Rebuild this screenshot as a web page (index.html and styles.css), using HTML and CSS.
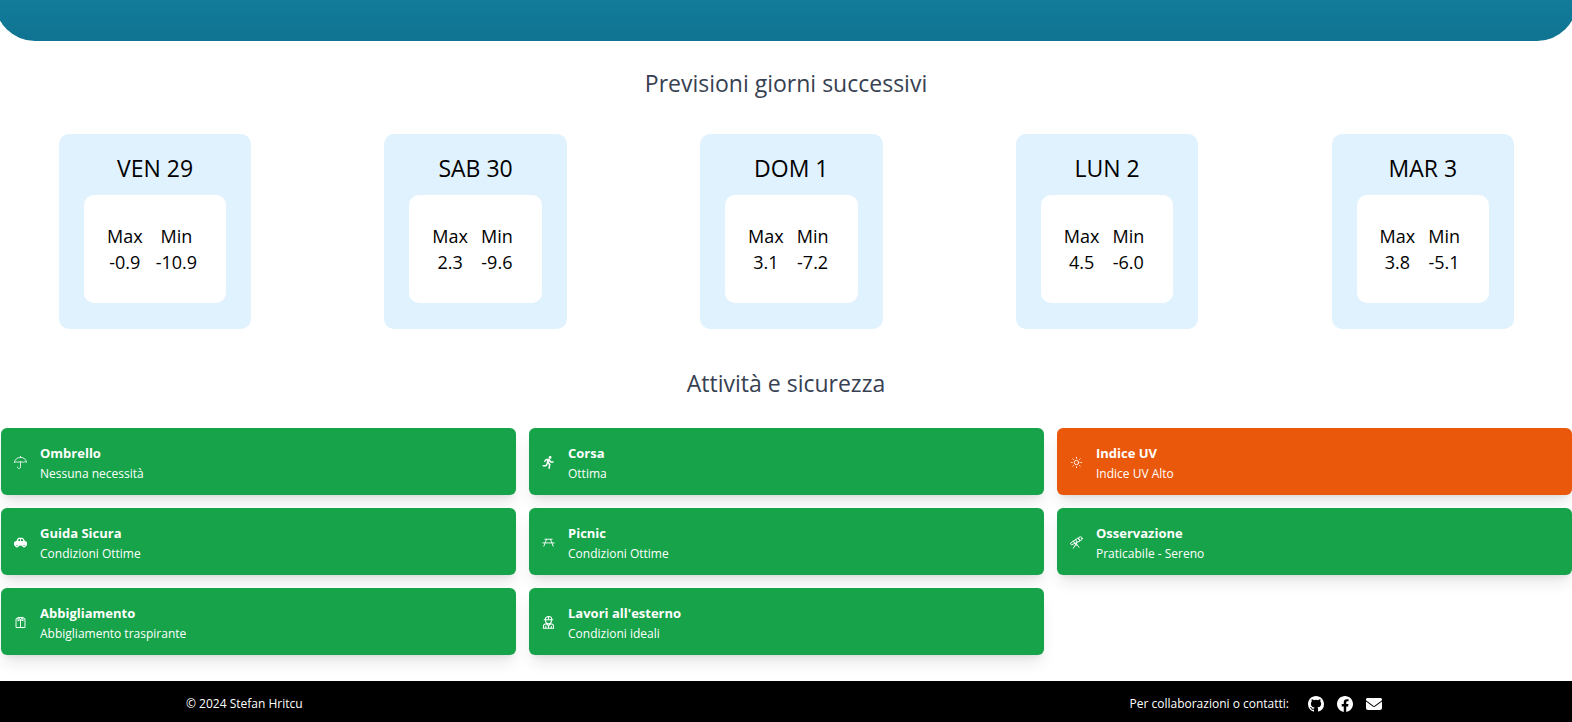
FILE: index.html
```html
<!DOCTYPE html>
<html lang="it">
<head>
<meta charset="utf-8">
<meta name="viewport" content="width=device-width, initial-scale=1">
<title>Previsioni meteo</title>
<link rel="stylesheet" href="styles.css">
</head>
<body>
<header class="hero"></header>
<main>
  <section>
    <h2 class="section-title">Previsioni giorni successivi</h2>
    <div class="forecast">
      <article class="day">
        <h3 class="day-name">VEN 29</h3>
        <div class="day-box"><table class="temps"><thead><tr><th>Max</th><th>Min</th></tr></thead><tbody><tr><td>-0.9</td><td>-10.9</td></tr></tbody></table></div>
      </article>
      <article class="day">
        <h3 class="day-name">SAB 30</h3>
        <div class="day-box"><table class="temps"><thead><tr><th>Max</th><th>Min</th></tr></thead><tbody><tr><td>2.3</td><td>-9.6</td></tr></tbody></table></div>
      </article>
      <article class="day">
        <h3 class="day-name">DOM 1</h3>
        <div class="day-box"><table class="temps"><thead><tr><th>Max</th><th>Min</th></tr></thead><tbody><tr><td>3.1</td><td>-7.2</td></tr></tbody></table></div>
      </article>
      <article class="day">
        <h3 class="day-name">LUN 2</h3>
        <div class="day-box"><table class="temps"><thead><tr><th>Max</th><th>Min</th></tr></thead><tbody><tr><td>4.5</td><td>-6.0</td></tr></tbody></table></div>
      </article>
      <article class="day">
        <h3 class="day-name">MAR 3</h3>
        <div class="day-box"><table class="temps"><thead><tr><th>Max</th><th>Min</th></tr></thead><tbody><tr><td>3.8</td><td>-5.1</td></tr></tbody></table></div>
      </article>
    </div>
  </section>
  <section class="safety">
    <h2 class="section-title">Attività e sicurezza</h2>
    <div class="activities">
      <article class="activity">
        <svg class="icon" viewBox="0 0 16 16" aria-hidden="true"><path d="M8 .5v1.200M.600 7.800C.800 4.300 4 1.700 8 1.700s7.200 2.600 7.400 6.100c-1.400-.9-2.900-.9-4 0-1.300-.9-5.500-.9-6.800 0-1.100-.9-2.600-.9-4 0M8 7.300v6.200c0 2.600-3.800 2.600-3.800 0" fill="none" stroke="currentColor" stroke-linecap="round" stroke-linejoin="round"/></svg>
        <div><h3 class="activity-name">Ombrello</h3><p class="activity-note">Nessuna necessità</p></div>
      </article>
      <article class="activity">
        <svg class="icon" viewBox="0 0 16 16" aria-hidden="true"><circle cx="10" cy="1.700" r="1.700" fill="currentColor"/><path d="M3.500 6.300 5.200 4.200 9 4.400l1.500 3h3M8.500 4.500 6.700 8.200l2.800 2.200-.7 4.600M6.200 9.800 5 12H1.500" fill="none" stroke="currentColor" stroke-width="1.900" stroke-linecap="round" stroke-linejoin="round"/><path d="m6.600 4 3.400 1-1.800 4.300-2.400-1z" fill="currentColor"/></svg>
        <div><h3 class="activity-name">Corsa</h3><p class="activity-note">Ottima</p></div>
      </article>
      <article class="activity alert">
        <svg class="icon" viewBox="0 0 16 16" aria-hidden="true"><g fill="none" stroke="currentColor" stroke-width="1.100" stroke-linecap="round"><circle cx="8" cy="8" r="2.700"/><path d="M8 1.700v1M8 13.300v1M1.700 8h1M13.300 8h1M3.500 3.500l.7.7M11.800 11.800l.7.7M12.500 3.500l-.7.7M4.200 11.800l-.7.7"/></g></svg>
        <div><h3 class="activity-name">Indice UV</h3><p class="activity-note">Indice UV Alto</p></div>
      </article>
      <article class="activity">
        <svg class="icon" viewBox="0 0 16 16" aria-hidden="true"><path fill="currentColor" fill-rule="evenodd" d="M1.300 6.800 3 6.200l1.100-2.400C4.500 2.800 5.100 2.200 6 2.200h4c.8 0 1.300.4 1.800 1.100L13.600 6.200c1.500.300 2.400 1.100 2.400 2.400V11c0 .6-.4 1-1 1h-.2a2.500 2.500 0 0 1-4.900 0H6.100a2.500 2.500 0 0 1-4.900 0H1c-.6 0-1-.4-1-1V8.700c0-.9.500-1.500 1.300-1.900M5.100 6.200h2.300V3.700H6.200c-.3 0-.5.200-.6.500zM8.600 6.200h3.100L10.400 4.100c-.2-.3-.4-.4-.7-.4H8.600zM3.650 12.300a.7.7 0 1 0 0-1.400.7.7 0 0 0 0 1.400m8.700 0a.7.7 0 1 0 0-1.400.7.7 0 0 0 0 1.400"/></svg>
        <div><h3 class="activity-name">Guida Sicura</h3><p class="activity-note">Condizioni Ottime</p></div>
      </article>
      <article class="activity">
        <svg class="icon" viewBox="0 0 16 16" aria-hidden="true"><path d="M3.500 4h9M1 8.500h14M5.500 4 2.300 12.500M10.500 4l3.200 8.500" fill="none" stroke="currentColor" stroke-width="1.100" stroke-linecap="round"/></svg>
        <div><h3 class="activity-name">Picnic</h3><p class="activity-note">Condizioni Ottime</p></div>
      </article>
      <article class="activity">
        <svg class="icon" viewBox="0 0 16 16" aria-hidden="true"><g fill="none" stroke="currentColor" stroke-width="1.200" stroke-linecap="round" stroke-linejoin="round"><path d="m1 8.500 9.200-6.300 2.300 3.900L2.200 10.700zM4.300 6.300l1.600 2.700M7 4.400l1.800 3.300"/><circle cx="12.800" cy="3.200" r="2.200"/><path d="M7.500 9 4.200 15M7.500 9l3.600 5M7.500 9v3"/></g></svg>
        <div><h3 class="activity-name">Osservazione</h3><p class="activity-note">Praticabile - Sereno</p></div>
      </article>
      <article class="activity">
        <svg class="icon" viewBox="0 0 16 16" aria-hidden="true"><g fill="none" stroke="currentColor" stroke-width="1.200" stroke-linejoin="round"><path d="M5.200 1.800h5.600l2.700 1.700v10.700h-11V3.500zM8 5v9M5.200 2 4.800 6 8 4.300 11.200 6 10.800 2M5.200 2 8 4.300 10.800 2"/></g></svg>
        <div><h3 class="activity-name">Abbigliamento</h3><p class="activity-note">Abbigliamento traspirante</p></div>
      </article>
      <article class="activity">
        <svg class="icon" viewBox="0 0 16 16" aria-hidden="true"><g fill="none" stroke="currentColor" stroke-width="1.300" stroke-linecap="round" stroke-linejoin="round"><path d="M2.700 4.500h10.600M4 4.300a4 3.600 0 0 1 8 0M4.500 5v1.300a3.500 3.400 0 0 0 7 0V5M8 .800v2.400M5 9.500l-2.400 1C1.800 11 1.700 12 1.700 15h12.600c0-3-.100-4-.900-4.500L11 9.500M5 9.500 8 12l3-2.500M8 12v3M4.600 12.500V15M11.400 12.500V15"/></g></svg>
        <div><h3 class="activity-name">Lavori all'esterno</h3><p class="activity-note">Condizioni ideali</p></div>
      </article>
    </div>
  </section>
</main>
<footer class="footer">
  <div class="footer-inner">
    <p>© 2024 Stefan Hritcu</p>
    <div class="contacts">
      <span>Per collaborazioni o contatti:</span>
      <nav class="links" aria-label="Contatti">
        <a href="#github" aria-label="GitHub"><svg viewBox="0 0 16 16"><path fill="currentColor" d="M8 0C3.580 0 0 3.580 0 8c0 3.540 2.290 6.530 5.470 7.590.400.070.550-.170.550-.380 0-.190-.010-.820-.010-1.490-2.010.370-2.530-.490-2.690-.940-.090-.230-.480-.940-.820-1.130-.280-.150-.680-.520-.010-.530.630-.010 1.080.580 1.230.820.720 1.210 1.870.870 2.330.660.070-.520.280-.870.510-1.070-1.780-.200-3.640-.890-3.640-3.950 0-.870.310-1.590.820-2.150-.080-.200-.360-1.020.080-2.120 0 0 .670-.210 2.200.820a7.400 7.400 0 0 1 4 0c1.530-1.040 2.200-.820 2.200-.820.440 1.100.160 1.920.080 2.120.510.560.820 1.270.820 2.150 0 3.070-1.870 3.750-3.650 3.950.290.250.540.730.540 1.480 0 1.070-.010 1.930-.010 2.200 0 .210.150.460.550.380A8.010 8.010 0 0 0 16 8c0-4.420-3.580-8-8-8"/></svg></a>
        <a href="#facebook" aria-label="Facebook"><svg viewBox="0 0 16 16"><path fill="currentColor" d="M16 8.049C16 3.603 12.418 0 8 0S0 3.603 0 8.049c0 4.017 2.926 7.347 6.750 7.951v-5.625H4.719V8.050H6.750V6.275c0-2.017 1.195-3.131 3.022-3.131.876 0 1.791.157 1.791.157v1.980h-1.009c-.993 0-1.303.621-1.303 1.258v1.510h2.218l-.354 2.326H9.250V16C13.074 15.396 16 12.066 16 8.049"/></svg></a>
        <a href="#email" aria-label="Email"><svg viewBox="0 0 512 512"><path fill="currentColor" d="M48 64C21.500 64 0 85.500 0 112c0 15.100 7.100 29.300 19.200 38.400L236.800 313.600c11.400 8.500 27 8.500 38.400 0L492.800 150.400c12.100-9.100 19.200-23.300 19.200-38.400 0-26.500-21.500-48-48-48H48zM0 176V384c0 35.300 28.700 64 64 64H448c35.300 0 64-28.700 64-64V176L294.400 339.200c-22.800 17.100-54 17.100-76.800 0L0 176z"/></svg></a>
      </nav>
    </div>
  </div>
</footer>
</body>
</html>
```
FILE: styles.css
```css
* { box-sizing: border-box; }

body {
  margin: 0;
  overflow-x: hidden;
  background: #fff;
  color: #000;
  font-family: "Segoe UI", "Open Sans", "Noto Sans", sans-serif;
  font-size: 12px;
  line-height: 20px;
}

h2, h3, p { margin: 0; font-weight: 400; }

.hero {
  height: 41px;
  margin: 0 -5px;
  border-radius: 0 0 40px 40px;
  background: linear-gradient(#127c9b, #0f7391);
}

.section-title {
  padding: 27px 0 35px;
  color: #374151;
  font-size: 23px;
  line-height: 31px;
  text-align: center;
}

.safety .section-title { padding: 39px 0 29px; }

.forecast {
  display: flex;
  flex-wrap: wrap;
  justify-content: space-between;
  padding: 0 58px 0 59px;
  gap: 16px;
}

.day {
  padding: 18px 25px 26px;
  border-radius: 10px;
  background: #e0f2fe;
}

.day-name {
  padding-bottom: 11px;
  font-size: 23px;
  line-height: 32px;
  text-align: center;
}

.day-box {
  padding: 28px 29px 28px 23px;
  border-radius: 10px;
  background: #fff;
}

.temps {
  border-collapse: collapse;
  font-size: 18px;
  line-height: 26px;
  text-align: center;
}

.temps th, .temps td { padding: 0; font-weight: 400; }
.temps th + th, .temps td + td { padding-left: 13px; }

.activities {
  display: grid;
  grid-template-columns: repeat(3, 1fr);
  gap: 13px;
  padding: 0 0 26px 1px;
}

.activity {
  display: flex;
  align-items: center;
  gap: 13px;
  padding: 14px 13px 12px;
  border-radius: 6px;
  background: #16a34a;
  color: #fff;
  box-shadow: 0 10px 15px -3px rgba(0, 0, 0, .1), 0 4px 6px -4px rgba(0, 0, 0, .1);
}

.activity.alert { background: #ea580c; }
.icon { flex: none; width: 13px; height: 13px; }
.activity-name { font-size: 13px; font-weight: 700; line-height: 22px; }
.activity-note { line-height: 19px; }

.footer { background: #000; color: #fff; }

.footer-inner {
  display: flex;
  justify-content: space-between;
  align-items: center;
  max-width: 1200px;
  margin: 0 auto;
  padding: 13px 0 8px;
}

.contacts { display: flex; align-items: center; gap: 19px; }
.links { display: flex; gap: 13px; padding-right: 4px; }
.links a { display: block; color: #fff; }
.links svg { display: block; width: 16px; height: 16px; }
```
